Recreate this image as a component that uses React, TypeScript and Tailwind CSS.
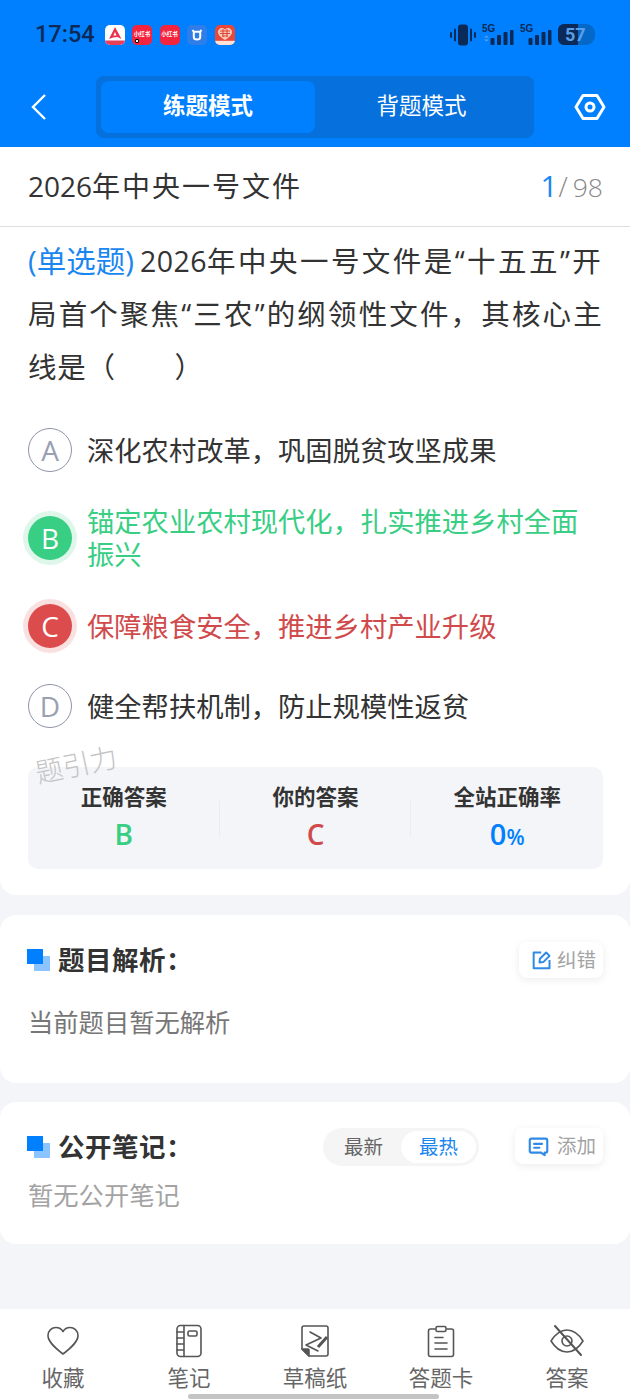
import React from "react";

const F = '"Open Sans", "Noto Sans CJK SC", sans-serif';

function AppIcons() {
  return (
    <div className="flex items-center gap-[7.5px]">
      <div className="relative w-[20px] h-[20px] rounded-[5px] bg-white overflow-hidden">
        <svg viewBox="0 0 20 20" className="w-[20px] h-[20px]">
          <path d="M10 2 L16.5 14 L12.5 12 L8 12.5 L4 14 Z M10 7 L8.4 10.6 L11.5 10.4 Z" fill="#e8324f" fillRule="evenodd" />
          <rect x="0" y="15.5" width="20" height="4.5" fill="#e8405a" />
        </svg>
      </div>
      <div className="relative w-[20px] h-[20px] rounded-[5px] bg-[#f4243f] flex items-center justify-center">
        <span className="text-white text-[5.5px] font-bold leading-none whitespace-nowrap">小红书</span>
        <span className="absolute left-[3px] bottom-[2px] w-[4px] h-[4px] bg-white rounded-[1px] border border-black" />
      </div>
      <div className="w-[20px] h-[20px] rounded-[5px] bg-[#f4243f] flex items-center justify-center">
        <span className="text-white text-[5.5px] font-bold leading-none whitespace-nowrap">小红书</span>
      </div>
      <div className="w-[20px] h-[20px] rounded-[5px] bg-[#2f7de8] flex items-center justify-center">
        <svg viewBox="0 0 20 20" className="w-[20px] h-[20px]">
          <path d="M5.5 5 L6.8 6.8 H13 L14.5 5 M6.8 7 V12 Q6.8 14.5 10 14.5 Q13.2 14.5 13.2 12 V7" fill="none" stroke="#fff" strokeWidth="2" />
        </svg>
      </div>
      <div className="w-[20px] h-[20px] rounded-[5px] bg-[#e8473a] overflow-hidden">
        <svg viewBox="0 0 20 20" className="w-[20px] h-[20px]">
          <path d="M10 15 C5 12 3 9.5 3 7 C3 4.5 5.5 3 7 3 C8.5 3 9.5 3.8 10 4.8 C10.5 3.8 11.5 3 13 3 C14.5 3 17 4.5 17 7 C17 9.5 15 12 10 15 Z" fill="#f9c9b8" />
          <path d="M5 6 H15 M5 8.5 H15 M7 11 H13 M8 4 V12 M12 4 V12" stroke="#d9392d" strokeWidth="0.9" />
          <rect x="0" y="15.8" width="20" height="4.2" fill="#fbe3d6" />
        </svg>
      </div>
    </div>
  );
}

function Signal({ data }: { data?: boolean }) {
  return (
    <div className="relative w-[32px] h-[21px]">
      <span className="absolute left-0 top-[-1px] text-[10px] font-bold leading-[11px] text-[#0b2a57]" style={{ fontFamily: '"Liberation Sans", sans-serif' }}>5G</span>
      <svg viewBox="0 0 32 21" className="absolute inset-0 w-[32px] h-[21px]">
        {data && <path d="M2 13.5 L4.5 11.5 L7 13.5 Z M2 15.5 L4.5 17.5 L7 15.5 Z" fill="#5d9fe8" />}
        <rect x="8.5" y="14" width="4" height="7" rx="1" fill="#0b2a57" />
        <rect x="15" y="11" width="4" height="10" rx="1" fill="#0b2a57" />
        <rect x="21.5" y="8" width="4" height="13" rx="1" fill="#0b2a57" />
        <rect x="28" y="6" width="3.5" height="15" rx="1" fill="#0b2a57" />
      </svg>
    </div>
  );
}

function StatusBar() {
  return (
    <div className="h-[68px] pl-[35px] pr-[35px] flex items-center justify-between pt-[1px]">
      <div className="flex items-center gap-[10px]">
        <span className="text-[23.5px] font-medium leading-none text-[#0b2a57]" style={{ fontFamily: 'Roboto, sans-serif' }}>17:54</span>
        <AppIcons />
      </div>
      <div className="flex items-center gap-[6px]">
        <svg viewBox="0 0 26 22" className="w-[26px] h-[22px]">
          <rect x="8" y="0.5" width="10" height="21" rx="3" fill="#0b2a57" />
          <rect x="0" y="8" width="2" height="6" rx="1" fill="#0b2a57" />
          <rect x="4" y="4.5" width="2" height="13" rx="1" fill="#0b2a57" />
          <rect x="20" y="4.5" width="2" height="13" rx="1" fill="#0b2a57" />
          <rect x="24" y="8" width="2" height="6" rx="1" fill="#0b2a57" />
        </svg>
        <Signal data />
        <Signal />
        <div className="relative w-[37px] h-[21px] rounded-l-[6px] rounded-r-[9px] bg-[#0468c8] overflow-hidden flex items-center">
          <div className="absolute left-0 top-0 bottom-0 w-[20px] bg-[#0b2a57]" />
          <span className="relative pl-[7px] text-[18px] font-bold leading-none text-[#5a9fe6]" style={{ fontFamily: 'Roboto, sans-serif' }}>57</span>
        </div>
      </div>
    </div>
  );
}

function Header() {
  return (
    <div className="h-[147px] bg-[#0080ff]">
      <StatusBar />
      <div className="h-[79px] flex items-start pl-[28px] pr-[24px] pt-[8px]">
        <div className="w-[68px] h-[62px] flex items-center">
          <svg viewBox="0 0 20 30" className="w-[20px] h-[30px] ml-[1px]">
            <path d="M16 3 L4 15 L16 27" fill="none" stroke="#fff" strokeWidth="2.4" />
          </svg>
        </div>
        <div className="w-[438px] h-[62px] bg-[#0670dd] rounded-[8px] p-[5px] flex">
          <div className="w-[214px] pb-[3px] bg-[#0080ff] rounded-[8px] flex items-center justify-center text-white text-[22.5px] font-bold">练题模式</div>
          <div className="flex-1 pb-[3px] flex items-center justify-center text-white text-[22.5px] pr-[1px]">背题模式</div>
        </div>
        <div className="flex-1 h-[62px] flex items-center justify-end">
          <svg viewBox="0 0 32 32" className="w-[32px] h-[32px]">
            <path d="M9 4.5 H23 L30 16 L23 27.5 H9 L2 16 Z" fill="none" stroke="#fff" strokeWidth="3" strokeLinejoin="round" />
            <circle cx="16" cy="16" r="4" fill="none" stroke="#fff" strokeWidth="3" />
          </svg>
        </div>
      </div>
    </div>
  );
}

function Option({ letter, text, tone }: { letter: string; text: React.ReactNode; tone?: "ok" | "bad" }) {
  const circle =
    tone === "ok"
      ? "bg-[#38ce84] text-white shadow-[0_0_0_5px_#dff6ea]"
      : tone === "bad"
        ? "bg-[#dd4c4c] text-white shadow-[0_0_0_5px_#fae1e1]"
        : "border-[1.5px] border-[#8f94a8] text-[#9a9fb2]";
  const color = tone === "ok" ? "text-[#38ce84]" : tone === "bad" ? "text-[#d04a4c]" : "text-[#333333]";
  return (
    <div className="flex items-center gap-[15px]">
      <div className={`w-[44px] h-[44px] shrink-0 rounded-full flex items-center justify-center text-[28px] ${circle}`}>
        {letter}
      </div>
      <div className={`flex-1 text-[27.3px] leading-[33px] ${color}`}>{text}</div>
    </div>
  );
}

function Stat({ label, children, divider }: { label: string; children: React.ReactNode; divider?: boolean }) {
  return (
    <div className="relative flex-1 flex flex-col items-center pt-[15px]">
      <div className="text-[21.5px] leading-[30px] font-bold text-[#333333]">{label}</div>
      <div className="text-[28px] leading-[38px] font-semibold mt-[3px]">{children}</div>
      {divider && <div className="absolute right-0 top-[34px] h-[36px] w-px bg-[#e9edf2]" />}
    </div>
  );
}

function Bullet() {
  return (
    <div className="relative w-[23px] h-[22px] shrink-0 -ml-[1px]">
      <div className="absolute right-0 bottom-0 w-[16px] h-[15px] bg-[#8cc4ff]" />
      <div className="absolute left-0 top-0 w-[16px] h-[15px] bg-[#0080ff]" />
    </div>
  );
}

function MiniButton({ icon, label, wide }: { icon: React.ReactNode; label: string; wide?: boolean }) {
  return (
    <div className={`h-[36px] ${wide ? "w-[88px] gap-[8px]" : "w-[84px] gap-[5px]"} pl-[13px] rounded-[8px] bg-white shadow-[0_2px_8px_rgba(0,0,0,0.08)] flex items-center text-[19.5px] text-[#a3a3a3]`}>
      {icon}
      <span>{label}</span>
    </div>
  );
}

function NavItem({ icon, label }: { icon: React.ReactNode; label: string }) {
  return (
    <div className="w-[126px] flex flex-col items-center">
      <div className="h-[42px] flex items-center justify-center">{icon}</div>
      <div className="text-[21.5px] leading-[30px] text-[#666666] mt-[1px]">{label}</div>
    </div>
  );
}

const nav = { fill: "none", stroke: "#555555", strokeWidth: 1.6, strokeLinecap: "round" as const, strokeLinejoin: "round" as const };

export default function App() {
  return (
    <div className="relative w-[630px] h-[1400px] overflow-hidden bg-[#f3f5f8] flex flex-col" style={{ fontFamily: F }}>
      <Header />
      <div className="h-[748px] bg-white rounded-b-[16px]">
        <div className="h-[80px] pb-[2px] flex items-center justify-between pl-[28px] pr-[27px] border-b border-[#dddddd]">
          <div className="text-[28px] text-[#333333]">2026<span className="tracking-[2px]">年中央一号文件</span></div>
          <div className="flex items-baseline">
            <span className="text-[30px] leading-none text-[#1a86f0]">1</span>
            <span className="text-[27px] leading-none font-light text-[#888888] ml-[1px]">/</span>
            <span className="text-[26.5px] leading-none font-light text-[#888888] ml-[5px]">98</span>
          </div>
        </div>
        <div className="px-[28px] pt-[7px] text-[28.5px] leading-[53px] text-[#333333] whitespace-nowrap">
          <span className="text-[#1a86f0] text-[29.5px] mr-[6px]">(单选题)</span>
          <span className="tracking-[0.5px]">2026</span>
          <span className="tracking-[2.45px]">年中央一号文件是“十五五”开</span>
          <br />
          <span className="tracking-[2.15px]">局首个聚焦“三农”的纲领性文件，其核心主</span>
          <br />
          <span className="tracking-[0.8px]">线是（　　）</span>
        </div>
        <div className="px-[28px] pt-[34px] flex flex-col">
          <div className="h-[44px]"><Option letter="A" text="深化农村改革，巩固脱贫攻坚成果" /></div>
          <div className="mt-[33px]"><Option letter="B" tone="ok" text="锚定农业农村现代化，扎实推进乡村全面振兴" /></div>
          <div className="mt-[33px]"><Option letter="C" tone="bad" text="保障粮食安全，推进乡村产业升级" /></div>
          <div className="mt-[36px]"><Option letter="D" text="健全帮扶机制，防止规模性返贫" /></div>
        </div>
        <div className="ml-[28px] mr-[27px] mt-[39px] h-[102px] rounded-[10px] bg-[#f3f5f8] flex">
          <Stat label="正确答案" divider><span className="text-[#38ce84]">B</span></Stat>
          <Stat label="你的答案" divider><span className="text-[#d04a4c]">C</span></Stat>
          <Stat label="全站正确率"><span className="text-[#0080ff] text-[29px]">0<span className="text-[21px]">%</span></span></Stat>
        </div>
      </div>

      <div className="mt-[20px] h-[168px] bg-white rounded-[16px] pl-[28px] pr-[27px] pt-[27px]">
        <div className="flex items-center justify-between h-[36px]">
          <div className="flex items-center gap-[8px]">
            <Bullet />
            <span className="text-[26.5px] font-bold text-[#333333] tracking-[0.5px] pt-[2px]">题目解析：</span>
          </div>
          <MiniButton
            label="纠错"
            icon={
              <svg viewBox="0 0 24 24" className="w-[20px] h-[20px]" fill="none" stroke="#2e8ae6" strokeWidth="2.4" strokeLinejoin="round">
                <path d="M11 3 H2 V22 H21 V12" />
                <path d="M9 15 L9.5 10.5 L17 3 L21 7 L13.5 14.5 Z" />
              </svg>
            }
          />
        </div>
        <div className="mt-[26px] text-[25.3px] leading-[36px] text-[#777777]">当前题目暂无解析</div>
      </div>

      <div className="mt-[19px] h-[142px] bg-white rounded-[16px] pl-[28px] pr-[27px] pt-[27px]">
        <div className="flex items-center h-[36px]">
          <div className="flex items-center gap-[8px]">
            <Bullet />
            <span className="text-[26.5px] font-bold text-[#333333] tracking-[0.5px] pt-[1px]">公开笔记：</span>
          </div>
          <div className="ml-auto mr-[36px] w-[156px] h-[38px] rounded-full bg-[#f5f5f5] p-[3px] flex text-[19.5px]">
            <div className="flex-1 flex items-center justify-center text-[#666666]">最新</div>
            <div className="w-[75px] rounded-full bg-white flex items-center justify-center text-[#1a86f0]">最热</div>
          </div>
          <div className="-mt-[2px]">
            <MiniButton
              wide
              label="添加"
              icon={
                <svg viewBox="0 0 24 24" className="w-[21px] h-[21px]" fill="none" stroke="#2e8ae6" strokeWidth="2.4" strokeLinejoin="round" strokeLinecap="round">
                  <path d="M4 3 H20 Q22 3 22 5 V17 Q22 19 20 19 H19 V22 L15 19 H4 Q2 19 2 17 V5 Q2 3 4 3 Z" />
                  <path d="M7 9 H16 M7 13.5 H13" />
                </svg>
              }
            />
          </div>
        </div>
        <div className="mt-[12px] text-[25.3px] leading-[36px] text-[#a3a3a3]">暂无公开笔记</div>
      </div>

      <div className="mt-auto h-[91px] bg-white flex pt-[11px]">
        <NavItem
          label="收藏"
          icon={
            <svg viewBox="0 0 34 32" className="w-[34px] h-[32px]" {...nav}>
              <path d="M17 29 C8 22 2 16.5 2 10.5 C2 5.5 6 2.5 10 2.5 C13 2.5 15.5 4 17 6.5 C18.5 4 21 2.5 24 2.5 C28 2.5 32 5.5 32 10.5 C32 16.5 26 22 17 29 Z" />
            </svg>
          }
        />
        <NavItem
          label="笔记"
          icon={
            <svg viewBox="0 0 28 34" className="w-[28px] h-[34px]" {...nav}>
              <rect x="2" y="1.5" width="24" height="31" rx="3.5" />
              <path d="M9 1.5 V32.5 M2 8 H9 M2 14 H9 M2 20 H9 M2 26 H9" />
              <rect x="13" y="7" width="9" height="5" rx="1.5" />
            </svg>
          }
        />
        <NavItem
          label="草稿纸"
          icon={
            <svg viewBox="0 0 28 32" className="w-[28px] h-[32px]" {...nav}>
              <path d="M1 24 V3 Q1 1 3 1 H25 Q27 1 27 3 V29 Q27 31 25 31 H8 Z" />
              <path d="M1 24 H7 Q8 24 8 25 V31 Z" fill="#555555" />
              <path d="M9 7 L20 13 L5 20 L17 26" />
              <path d="M17 22 L26 12" strokeWidth="3" strokeLinecap="butt" />
            </svg>
          }
        />
        <NavItem
          label="答题卡"
          icon={
            <svg viewBox="0 0 28 33" className="w-[28px] h-[33px]" {...nav}>
              <path d="M8 4 H3.5 Q1.5 4 1.5 6 V29.5 Q1.5 31.5 3.5 31.5 H24.5 Q26.5 31.5 26.5 29.5 V6 Q26.5 4 24.5 4 H20" />
              <rect x="9" y="1.5" width="10" height="5" rx="1.5" />
              <path d="M8 12.5 H16 M8 18 H20 M8 24 H20" />
            </svg>
          }
        />
        <NavItem
          label="答案"
          icon={
            <svg viewBox="0 0 36 34" className="w-[36px] h-[34px]" {...nav}>
              <path d="M2 17 C7 9 12 6 18 6 C24 6 29 9 34 17 C29 25 24 28 18 28 C12 28 7 25 2 17 Z" />
              <circle cx="18" cy="17" r="5" />
              <path d="M6 2 L32 31" strokeWidth="2" />
            </svg>
          }
        />
      </div>

      <div className="absolute left-[35px] top-[751px] -rotate-[12deg] text-[27.5px] leading-none font-light text-[#c4c4c4] whitespace-nowrap pointer-events-none">题引力</div>
      <div className="absolute left-[188px] bottom-[1px] w-[251px] h-[5px] rounded-full bg-[#c4c4c4]" />
    </div>
  );
}
